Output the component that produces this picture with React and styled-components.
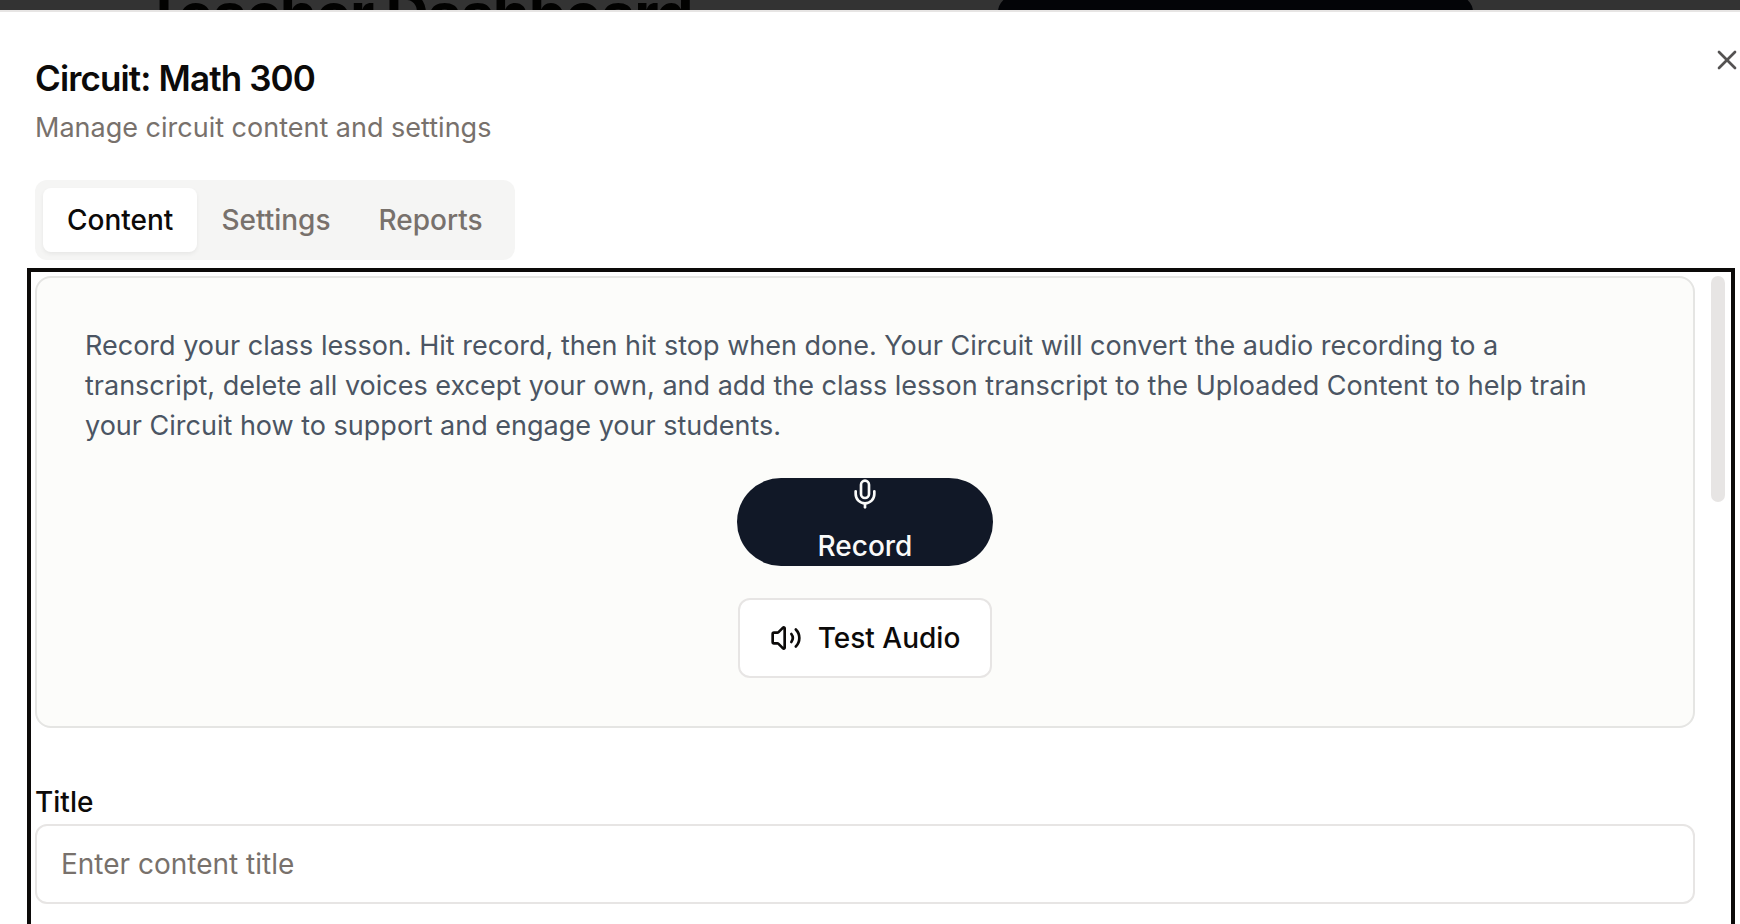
import React, { useState } from "react";
import styled, { createGlobalStyle } from "styled-components";
import { Mic, Volume2, X } from "lucide-react";

const GlobalStyle = createGlobalStyle`
  *, *::before, *::after { box-sizing: border-box; }
  html, body, #root { height: 100%; }
  body {
    margin: 0;
    overflow: hidden;
    background: #fff;
    color: #0c0a09;
    font-family: Inter, "Liberation Sans", sans-serif;
    font-size: 28px;
    line-height: 40px;
  }
  h1, h2, p { margin: 0; }
  button, input { font: inherit; color: inherit; }
  button { border: 0; padding: 0; cursor: pointer; }
`;

const Page = styled.div`
  height: 100%;
  overflow: hidden;
`;

/* The dashboard header is scrolled most of the way out of view. */
const DashboardHeader = styled.header`
  display: flex;
  justify-content: space-between;
  margin-top: -22px;
  padding: 0 267px 0 144px;
`;

const DashboardTitle = styled.h1`
  font-size: 60px;
  line-height: 72px;
  font-weight: 700;
  letter-spacing: -0.025em;
`;

const DashboardAction = styled.button`
  width: 475px;
  height: 80px;
  margin-top: 18px;
  border-radius: 16px;
  background: #111827;
`;

const Overlay = styled.div`
  position: fixed;
  inset: 0;
  display: flex;
  padding-top: 10px;
  overflow: hidden;
  background: rgba(0, 0, 0, 0.8);
`;

/* The dialog is slightly wider than the window on both sides. */
const Dialog = styled.section`
  position: relative;
  flex: 1;
  display: flex;
  flex-direction: column;
  margin: 0 -35px 0 -15px;
  padding: 48px 48px 0;
  border: 2px solid #e7e5e4;
  border-bottom: 0;
  background: #fff;
`;

const CloseButton = styled.button`
  position: absolute;
  top: 32px;
  right: 30px;
  display: flex;
  background: none;
  opacity: 0.7;
`;

const DialogHeader = styled.div`
  display: flex;
  flex-direction: column;
  gap: 12px;
  margin-bottom: 32px;
`;

const DialogTitle = styled.h2`
  font-size: 35px;
  line-height: 36px;
  font-weight: 600;
  letter-spacing: -0.025em;
`;

const Description = styled.p`
  font-size: 27px;
  color: #78716c;
`;

const TabList = styled.div`
  display: flex;
  align-self: flex-start;
  margin-bottom: 8px;
  padding: 8px;
  border-radius: 12px;
  background: #f5f5f4;
`;

const Tab = styled.button`
  padding: 12px 24px;
  border-radius: 8px;
  font-weight: 500;
  color: ${(p) => (p.$active ? "#0c0a09" : "#78716c")};
  background: ${(p) => (p.$active ? "#fff" : "transparent")};
  box-shadow: ${(p) => (p.$active ? "0 2px 4px rgba(0, 0, 0, 0.06)" : "none")};
`;

const Panel = styled.div`
  flex: 1;
  display: flex;
  align-items: flex-start;
  gap: 16px;
  margin: 0 -10px 0 -8px;
  padding: 4px 6px 0 4px;
  border: 4px solid #0c0a09;
  border-bottom: 0;
`;

const PanelContent = styled.div`
  flex: 1;
  display: flex;
  flex-direction: column;
  gap: 60px;
`;

const ScrollThumb = styled.div`
  width: 14px;
  height: 226px;
  border-radius: 7px;
  background: #e7e5e4;
`;

const RecorderCard = styled.div`
  display: flex;
  flex-direction: column;
  align-items: center;
  gap: 32px;
  padding: 48px;
  border: 2px solid #e5e5e3;
  border-radius: 16px;
  background: #fcfcfa;
`;

const Instructions = styled.p`
  align-self: stretch;
  padding-right: 48px;
  font-size: 27px;
  color: #4b5563;
`;

const RecordButton = styled.button`
  display: flex;
  flex-direction: column;
  align-items: center;
  gap: 16px;
  width: 256px;
  border-radius: 44px;
  background: #111827;
  color: #fafaf9;
  font-weight: 500;
`;

const TestButton = styled.button`
  display: flex;
  align-items: center;
  gap: 16px;
  padding: 18px 30px;
  border: 2px solid #e7e5e4;
  border-radius: 12px;
  background: #fff;
  font-weight: 500;
`;

const Field = styled.div`
  display: flex;
  flex-direction: column;
  gap: 8px;
`;

const FieldLabel = styled.label`
  line-height: 28px;
  font-weight: 500;
`;

const TextInput = styled.input`
  width: 100%;
  height: 80px;
  padding: 0 24px;
  border: 2px solid #e7e5e4;
  border-radius: 12px;
  background: #fff;
  outline: none;

  &::placeholder {
    color: #78716c;
    opacity: 1;
  }
`;

const tabs = ["Content", "Settings", "Reports"];

export default function App() {
  const [active, setActive] = useState("Content");

  return (
    <>
      <GlobalStyle />
      <Page>
        <DashboardHeader>
          <DashboardTitle>Teacher Dashboard</DashboardTitle>
          <DashboardAction aria-label="Dashboard action" />
        </DashboardHeader>
      </Page>
      <Overlay>
        <Dialog role="dialog" aria-modal="true" aria-labelledby="dialog-title">
          <DialogHeader>
            <DialogTitle id="dialog-title">Circuit: Math 300</DialogTitle>
            <Description>Manage circuit content and settings</Description>
          </DialogHeader>
          <TabList role="tablist">
            {tabs.map((name) => (
              <Tab
                key={name}
                role="tab"
                aria-selected={active === name}
                $active={active === name}
                onClick={() => setActive(name)}
              >
                {name}
              </Tab>
            ))}
          </TabList>
          <Panel role="tabpanel">
            <PanelContent>
              <RecorderCard>
                <Instructions>
                  Record your class lesson. Hit record, then hit stop when done.
                  Your Circuit will convert the audio recording to a transcript,
                  delete all voices except your own, and add the class lesson
                  transcript to the Uploaded Content to help train your Circuit
                  how to support and engage your students.
                </Instructions>
                <RecordButton>
                  <Mic size={32} />
                  Record
                </RecordButton>
                <TestButton>
                  <Volume2 size={32} />
                  Test Audio
                </TestButton>
              </RecorderCard>
              <Field>
                <FieldLabel htmlFor="content-title">Title</FieldLabel>
                <TextInput
                  id="content-title"
                  type="text"
                  placeholder="Enter content title"
                />
              </Field>
            </PanelContent>
            <ScrollThumb />
          </Panel>
          <CloseButton aria-label="Close">
            <X size={32} />
          </CloseButton>
        </Dialog>
      </Overlay>
    </>
  );
}
